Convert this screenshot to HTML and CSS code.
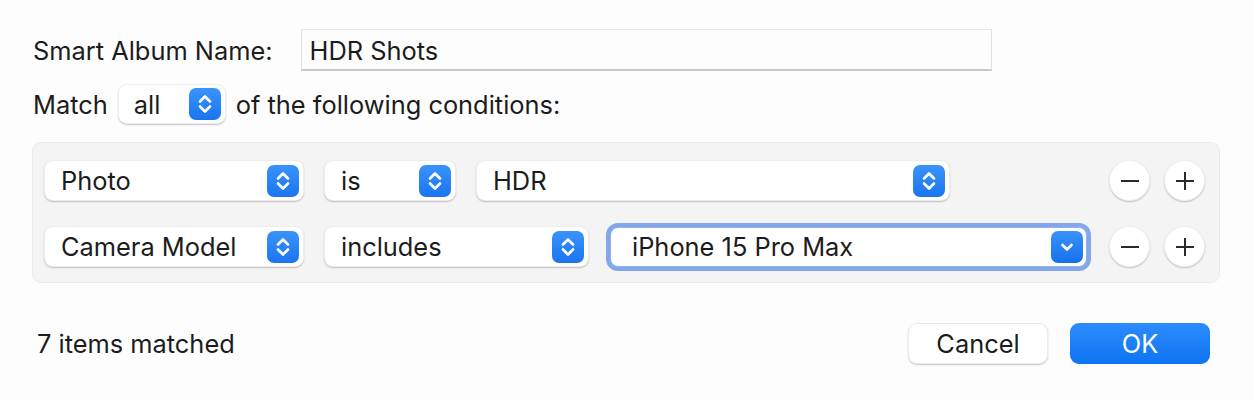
FILE: index.html
```html
<!DOCTYPE html>
<html>
<head>
<meta charset="utf-8">
<link rel="stylesheet" href="styles.css">
</head>
<body>
<div class="dialog">
  <div class="name-row">
    <span class="label">Smart Album Name:</span>
    <div class="textfield">HDR Shots</div>
  </div>
  <div class="match-row">
    <span class="label">Match</span>
    <div class="popup w-all"><span class="ptext">all</span><span class="stepper"><svg viewBox="0 0 32 32" width="32" height="32"><path d="M11 13.5 L16 8.5 L21 13.5 M11 18.5 L16 23.5 L21 18.5" fill="none" stroke="#fff" stroke-width="2.6" stroke-linecap="round" stroke-linejoin="round"/></svg></span></div>
    <span class="label">of the following conditions:</span>
  </div>
  <div class="panel">
    <div class="crow">
      <div class="popup w-field"><span class="ptext">Photo</span><span class="stepper"><svg viewBox="0 0 32 32" width="32" height="32"><path d="M11 13.5 L16 8.5 L21 13.5 M11 18.5 L16 23.5 L21 18.5" fill="none" stroke="#fff" stroke-width="2.6" stroke-linecap="round" stroke-linejoin="round"/></svg></span></div>
      <div class="popup w-is"><span class="ptext">is</span><span class="stepper"><svg viewBox="0 0 32 32" width="32" height="32"><path d="M11 13.5 L16 8.5 L21 13.5 M11 18.5 L16 23.5 L21 18.5" fill="none" stroke="#fff" stroke-width="2.6" stroke-linecap="round" stroke-linejoin="round"/></svg></span></div>
      <div class="popup w-hdr"><span class="ptext">HDR</span><span class="stepper"><svg viewBox="0 0 32 32" width="32" height="32"><path d="M11 13.5 L16 8.5 L21 13.5 M11 18.5 L16 23.5 L21 18.5" fill="none" stroke="#fff" stroke-width="2.6" stroke-linecap="round" stroke-linejoin="round"/></svg></span></div>
      <div class="circles">
        <div class="circle"><span class="minus"></span></div>
        <div class="circle"><span class="plus"></span></div>
      </div>
    </div>
    <div class="crow">
      <div class="popup w-field"><span class="ptext">Camera Model</span><span class="stepper"><svg viewBox="0 0 32 32" width="32" height="32"><path d="M11 13.5 L16 8.5 L21 13.5 M11 18.5 L16 23.5 L21 18.5" fill="none" stroke="#fff" stroke-width="2.6" stroke-linecap="round" stroke-linejoin="round"/></svg></span></div>
      <div class="popup w-inc"><span class="ptext">includes</span><span class="stepper"><svg viewBox="0 0 32 32" width="32" height="32"><path d="M11 13.5 L16 8.5 L21 13.5 M11 18.5 L16 23.5 L21 18.5" fill="none" stroke="#fff" stroke-width="2.6" stroke-linecap="round" stroke-linejoin="round"/></svg></span></div>
      <div class="combo"><span class="ptext">iPhone 15 Pro Max</span><span class="stepper"><svg viewBox="0 0 32 32" width="32" height="32"><path d="M11.5 14 L16 18.5 L20.5 14" fill="none" stroke="#fff" stroke-width="2.6" stroke-linecap="round" stroke-linejoin="round"/></svg></span></div>
      <div class="circles">
        <div class="circle"><span class="minus"></span></div>
        <div class="circle"><span class="plus"></span></div>
      </div>
    </div>
  </div>
  <div class="footer">
    <span class="label count">7 items matched</span>
    <div class="buttons">
      <div class="btn cancel">Cancel</div>
      <div class="btn ok">OK</div>
    </div>
  </div>
</div>
</body>
</html>
```
FILE: styles.css
```css
html, body {
  margin: 0;
  padding: 0;
  background: #fdfdfd;
}
body {
  font-family: Inter, "Liberation Sans", sans-serif;
  font-size: 25.4px;
  color: #1c1c1c;
  width: 1254px;
  height: 400px;
  overflow: hidden;
}
.dialog {
  padding: 29px 34px 0 32px;
  display: flex;
  flex-direction: column;
}
.label {
  white-space: nowrap;
}
.name-row {
  display: flex;
  align-items: center;
  height: 42px;
  padding-left: 1px;
}
.textfield {
  margin-left: 28px;
  width: 691px;
  height: 42px;
  box-sizing: border-box;
  padding: 0 8px;
  line-height: 42px;
  background: #fdfdfd;
  border: 1px solid #e2e2e2;
  border-bottom: 2px solid #c9c9c9;
  border-top-color: #e6e6e6;
}
.match-row {
  display: flex;
  align-items: center;
  margin-top: 13px;
  height: 40px;
  padding-left: 1px;
  gap: 10px;
}
.popup, .combo {
  display: flex;
  align-items: center;
  justify-content: space-between;
  box-sizing: border-box;
  background: #fff;
  border-radius: 9px;
  border: 1px solid rgba(0,0,0,0.07);
  box-shadow: 0 1px 1.5px rgba(0,0,0,0.22);
  padding: 0 4px 0 16px;
}
.popup {
  height: 41px;
}
.w-all { width: 108px; padding-left: 15px; height: 40px; }
.w-field { width: 260px; }
.w-is { width: 132px; }
.w-hdr { width: 474px; }
.w-inc { width: 265px; }
.stepper {
  width: 32px;
  height: 32px;
  border-radius: 7px;
  background: linear-gradient(#3a93fb, #1a75ef);
  display: flex;
}
.stepper svg { display: block; }
.panel {
  margin-top: 18px;
  background: #f4f4f4;
  border: 1px solid #ebebeb;
  border-radius: 9px;
  padding: 17px 14px 15px 11px;
  display: flex;
  flex-direction: column;
  gap: 25px;
}
.crow {
  display: flex;
  align-items: center;
  gap: 20px;
  height: 41px;
}
.combo {
  width: 477px;
  height: 40px;
  margin-left: 1px;
  padding-left: 21px;
  padding-right: 3px;
  border-radius: 8px;
  border: 1px solid #8fb0ee;
  box-shadow: 0 0 0 4px #84a7ec;
}
.combo .stepper {
  background: linear-gradient(#3a93fb, #1670ec);
}
.circles {
  margin-left: auto;
  display: flex;
  gap: 14px;
}
.circle {
  width: 41px;
  height: 41px;
  box-sizing: border-box;
  border-radius: 50%;
  background: #fff;
  border: 1px solid rgba(0,0,0,0.06);
  box-shadow: 0 1px 1.5px rgba(0,0,0,0.22);
  display: flex;
  align-items: center;
  justify-content: center;
  position: relative;
}
.minus, .plus {
  display: block;
  width: 18px;
  height: 2px;
  background: #2a2a2a;
  position: relative;
}
.plus::after {
  content: "";
  position: absolute;
  left: 8px;
  top: -8px;
  width: 2px;
  height: 18px;
  background: #2a2a2a;
}
.footer {
  margin-top: 40px;
  display: flex;
  align-items: center;
  justify-content: space-between;
  height: 41px;
}
.count {
  padding-left: 5px;
}
.buttons {
  display: flex;
  gap: 22px;
  margin-right: 10px;
}
.btn {
  width: 140px;
  height: 41px;
  box-sizing: border-box;
  border-radius: 9px;
  display: flex;
  align-items: center;
  justify-content: center;
}
.cancel {
  background: #fff;
  border: 1px solid rgba(0,0,0,0.08);
  box-shadow: 0 1px 1.5px rgba(0,0,0,0.22);
}
.ok {
  background: linear-gradient(#2a8cfc, #0f74f3);
  color: #fff;
}
```
